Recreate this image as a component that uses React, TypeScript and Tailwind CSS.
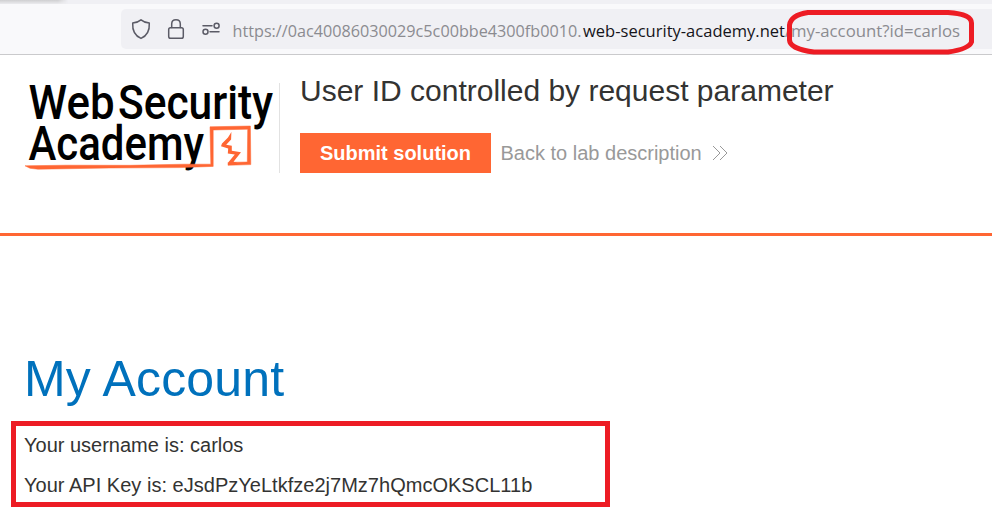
function AddressBar() {
  return (
    <header className="h-[55px] border-b border-[#cacacc] bg-[#f9f9fb]">
      <div className="flex h-1 bg-[#f0f0f4]">
        <div className="h-full w-[68px] bg-gradient-to-b from-[#cfcfd1] to-[#ececef] [mask-image:linear-gradient(to_right,black_85%,transparent)]" />
      </div>
      <div className="mt-[5px] ml-[121px] flex h-10 items-center rounded-l-[5px] bg-[#f0f0f4]">
        <svg className="h-10 w-[112px] shrink-0" viewBox="0 0 112 40" fill="none" stroke="#5b5b66" strokeWidth="1.5" strokeLinejoin="round" strokeLinecap="round">
          <path d="M20 10.8 C17.6 12.8 14.6 13.7 11.7 14 C11.3 20.6 13.5 26.6 20 29.4 C26.5 26.6 28.7 20.6 28.3 14 C25.4 13.7 22.4 12.8 20 10.8Z" />
          <rect x="47.7" y="18.7" width="14.6" height="10.6" rx="1.8" />
          <path d="M50.7 18.5 V15 C50.7 9.4 59.3 9.4 59.3 15 V18.5" />
          <path d="M82 16.7 H91 M89 22.8 H98" />
          <circle cx="95.6" cy="16.8" r="2.5" />
          <circle cx="84.5" cy="22.8" r="2.5" />
        </svg>
        <svg className="h-10 w-[759px] shrink-0 font-['Open_Sans','Noto_Sans',sans-serif] text-[17px]" viewBox="0 0 759 40" fill="#8b8b90">
          <text x="-0.5" y="28" textLength="349" lengthAdjust="spacingAndGlyphs">https://0ac40086030029c5c00bbe4300fb0010.</text>
          <text x="350" y="28" fill="#15141a" textLength="202" lengthAdjust="spacingAndGlyphs">web-security-academy.net</text>
          <text x="552" y="28" textLength="5.5" lengthAdjust="spacingAndGlyphs">/</text>
          <text x="558" y="28" textLength="169" lengthAdjust="spacingAndGlyphs">my-account?id=carlos</text>
        </svg>
      </div>
    </header>
  );
}

function Logo() {
  return (
    <svg className="h-[110px] w-[279px] shrink-0" viewBox="0 70 279 110" role="img" aria-label="Web Security Academy">
      <g className="font-[Roboto,sans-serif] text-[48px] font-medium" fill="#000">
        <text x="28.5" y="119" textLength="86" lengthAdjust="spacingAndGlyphs">Web</text>
        <text x="118" y="119" textLength="155" lengthAdjust="spacingAndGlyphs">Security</text>
        <text x="28.5" y="160" textLength="175.5" lengthAdjust="spacingAndGlyphs">Academy</text>
      </g>
      <path d="M25 165.8 L66 165.2 L130 165.3 L184 164.2 L210.8 164.2 L210 126.8 L250.4 126 L250.8 164.6 L228 165.3 V162.4 L247.3 162 L247.7 129.2 L213.2 130 L213.2 166.4 L180 167.6 L110 168 L38 169.2 L30 168.3Z" fill="#ff6633" stroke="#ff6633" strokeWidth=".5" />
      <path d="M231.4 132 L231.1 139.5 L226.2 144.8 L231.8 145.8 L231.8 150.8 L241 152.2 L233.5 161.8 L237.5 162.6 L228 164.8 L229 161.5 L234.8 154.6 L227.8 153.5 L228.2 148.4 L221 146.2 L222 143.5 L228 137.5Z" fill="#ff6633" />
    </svg>
  );
}

export default function App() {
  return (
    <div className="relative h-[513px] w-[992px] overflow-hidden bg-white font-['Liberation_Sans',Arial,sans-serif] text-xl text-[#333332]">
      <AddressBar />
      <section className="flex h-[181px] border-b-3 border-[#ff6633] pt-[15px]">
        <Logo />
        <div className="mt-[13px] h-[90px] w-px bg-[#e2e2e2]" />
        <div className="ml-5 pt-[3px]">
          <h2 className="text-[30px] leading-[36px] whitespace-nowrap">User ID controlled by request parameter</h2>
          <div className="mt-6 flex h-10 items-center">
            <button className="h-10 w-[191px] bg-[#ff6633] font-bold text-white">Submit solution</button>
            <a className="ml-[9.5px] flex items-center text-[#999]">
              Back to lab description
              <svg className="ml-[10px] h-4 w-4" viewBox="0 0 16 16" fill="none" stroke="#999" strokeWidth="1">
                <path d="M1 1 L8 8 L1 15 M8 1 L15 8 L8 15" />
              </svg>
            </a>
          </div>
        </div>
      </section>
      <main className="pt-[113px]">
        <h1 className="ml-6 text-[50px] leading-[60px] tracking-[0.2px] text-[#0071bc]">My Account</h1>
        <div className="mt-[12px] ml-[11px] h-[86px] w-[599px] border-5 border-[#ed1c24] pl-2">
          <p className="-mt-px h-10 leading-10">Your username is: carlos</p>
          <p className="h-10 leading-10 tracking-[0.02px]">Your API Key is: eJsdPzYeLtkfze2j7Mz7hQmcOKSCL11b</p>
        </div>
      </main>
      <svg className="absolute top-0 left-[780px] h-16 w-[200px]" viewBox="780 0 200 64" fill="none" stroke="#ed1c24" strokeWidth="5" strokeLinejoin="round">
        <path d="M808 12.5 H948 Q971.5 14 971.5 23 V42 Q969 49 948 52 H814 Q790 49 789.5 40 V25 Q791 15 808 12.5Z" />
      </svg>
    </div>
  );
}
